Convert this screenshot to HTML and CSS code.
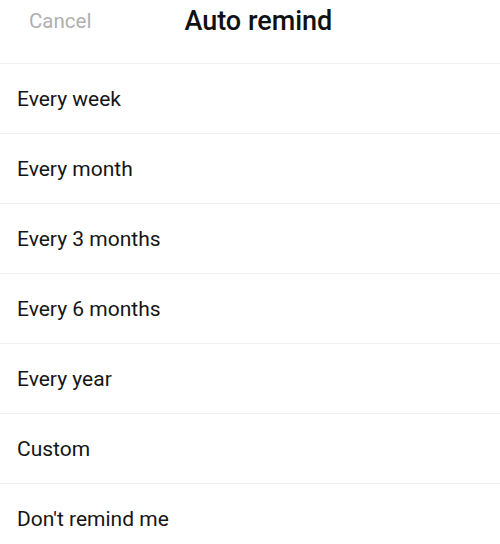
FILE: index.html
```html
<!DOCTYPE html>
<html lang="en">
  <head>
    <meta charset="UTF-8" />
    <meta name="viewport" content="width=device-width, initial-scale=1.0" />
    <title>Auto remind</title>
    <link rel="stylesheet" href="styles.css">
  </head>
  <body>
    <div class="header">
      <span class="cancel">Cancel</span>
      <span class="title">Auto remind</span>
    </div>
    <ul class="options">
      <li class="option">Every week</li>
      <li class="option">Every month</li>
      <li class="option">Every 3 months</li>
      <li class="option">Every 6 months</li>
      <li class="option">Every year</li>
      <li class="option">Custom</li>
      <li class="option">Don't remind me</li>
    </ul>
  </body>
</html>
```

FILE: styles.css
```css
* {
  box-sizing: border-box;
}
body {
  margin: 0;
  background: #fff;
  font-family: Roboto, "Liberation Sans", sans-serif;
  color: #151515;
}
.header {
  display: flex;
  align-items: flex-start;
  height: 64px;
  padding-left: 29px;
  border-bottom: 1px solid #f0f0f0;
}
.cancel {
  margin-top: 9px;
  font-size: 20.5px;
  line-height: 24px;
  color: #b0b0b0;
}
.title {
  margin-top: 5px;
  margin-left: 93px;
  font-size: 27px;
  line-height: 32px;
  font-weight: 500;
  color: #111;
}
.options {
  list-style: none;
  margin: 0;
  padding: 0;
}
.option {
  display: flex;
  align-items: center;
  height: 70px;
  padding-left: 17px;
  border-bottom: 1px solid #f0f0f0;
  font-size: 21px;
}
```
